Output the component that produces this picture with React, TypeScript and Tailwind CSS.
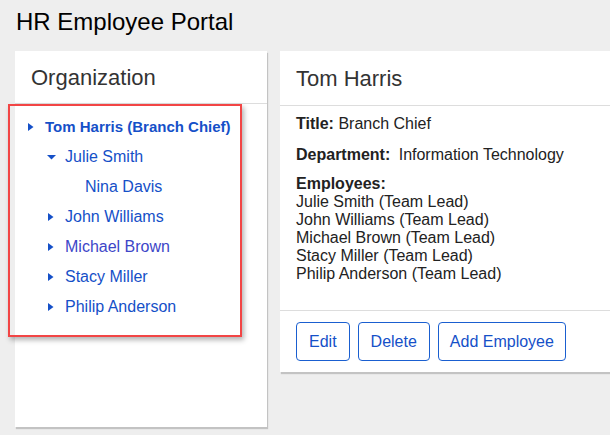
import React from 'react';

interface TreeNode {
  name: string;
  level: number;
  arrow?: 'right' | 'down';
  bold?: boolean;
  visited?: boolean;
}

const nodes: TreeNode[] = [
  { name: 'Tom Harris (Branch Chief)', level: 0, arrow: 'right', bold: true },
  { name: 'Julie Smith', level: 1, arrow: 'down' },
  { name: 'Nina Davis', level: 2 },
  { name: 'John Williams', level: 1, arrow: 'right' },
  { name: 'Michael Brown', level: 1, arrow: 'right', visited: true },
  { name: 'Stacy Miller', level: 1, arrow: 'right' },
  { name: 'Philip Anderson', level: 1, arrow: 'right' },
];

const employees = [
  'Julie Smith (Team Lead)',
  'John Williams (Team Lead)',
  'Michael Brown (Team Lead)',
  'Stacy Miller (Team Lead)',
  'Philip Anderson (Team Lead)',
];

const Caret: React.FC<{ dir: 'right' | 'down' }> = ({ dir }) => (
  <svg width="10" height="10" viewBox="0 0 10 10" className="shrink-0">
    {dir === 'right' ? (
      <path d="M1 1 L6.5 5 L1 9 Z" fill="#1550c8" />
    ) : (
      <path d="M0 3 L9 3 L4.5 7.5 Z" fill="#1550c8" />
    )}
  </svg>
);

const indent = ['pl-[17px]', 'pl-[37px]', 'pl-[57px]'];

const App: React.FC = () => {
  return (
    <div className="min-h-[435px] w-[610px] overflow-hidden bg-[#eeeeee] font-['Liberation_Sans',Arial,sans-serif] text-[#222]">
      <h1 className="px-4 pt-[8px] text-[24px] leading-[28px] text-black">HR Employee Portal</h1>

      <div className="mt-[15px] flex items-start gap-[13px] pl-[15px]">
        {/* organization tree */}
        <div className="h-[376px] w-[252px] shrink-0 bg-white shadow-[1px_2px_1px_rgba(0,0,0,0.18)]">
          <div className="flex h-[53px] items-center border-b border-[#dddddd] px-4 text-[22px] text-[#333]">
            Organization
          </div>
          <div className="-ml-[7px] h-[233px] w-[234px] border-2 border-[#f24545] pt-[6px] shadow-[2px_3px_5px_rgba(0,0,0,0.3)]">
            {nodes.map((n) => (
              <div
                key={n.name}
                className={`flex h-[30px] items-center ${indent[n.level]} ${n.bold ? 'text-[15px] font-bold' : 'text-[16px]'} ${n.visited ? 'text-[#3d46c8]' : 'text-[#1550c8]'}`}
              >
                <div className="flex w-[18px] shrink-0 items-center">
                  {n.arrow && <Caret dir={n.arrow} />}
                </div>
                <span>{n.name}</span>
              </div>
            ))}
          </div>
        </div>

        {/* details */}
        <div className="w-[340px] shrink-0 bg-white shadow-[1px_2px_1px_rgba(0,0,0,0.18)]">
          <div className="flex h-[55px] items-center border-b border-[#dddddd] px-4 text-[22px] text-[#333]">
            Tom Harris
          </div>
          <div className="border-b border-[#dddddd] px-4 pb-[27px] pt-[8px] text-[16px] leading-[18px]">
            <p className="py-[1px]">
              <span className="font-bold">Title:</span> Branch Chief
            </p>
            <p className="mt-[11px] py-[1px]">
              <span className="mr-[4px] font-bold">Department:</span> Information Technology
            </p>
            <p className="mt-[10px] font-bold">Employees:</p>
            {employees.map((e) => (
              <p key={e}>{e}</p>
            ))}
          </div>
          <div className="flex gap-2 px-4 pb-[11px] pt-[11px]">
            <button className="h-[39px] rounded border border-[#1a5fd0] px-[12px] text-[16px] text-[#1550c8]">Edit</button>
            <button className="h-[39px] rounded border border-[#1a5fd0] px-[12px] text-[16px] text-[#1550c8]">Delete</button>
            <button className="h-[39px] rounded border border-[#1a5fd0] px-[11px] text-[16px] text-[#1550c8]">Add Employee</button>
          </div>
        </div>
      </div>
    </div>
  );
};

export default App;
